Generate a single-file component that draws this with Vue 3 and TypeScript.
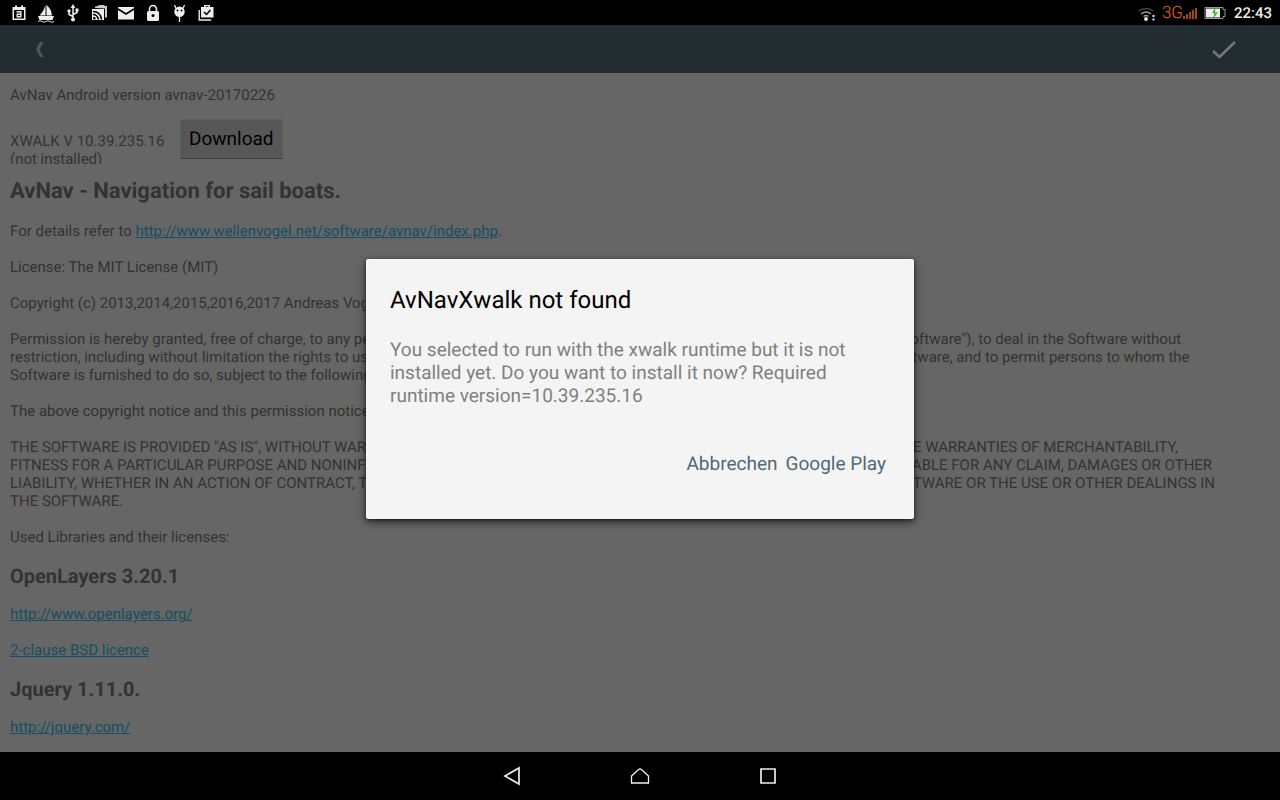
<script setup lang="ts">
interface Library {
  name: string
  links: { label: string; href: string }[]
}

const libraries: Library[] = [
  {
    name: 'OpenLayers 3.20.1',
    links: [
      { label: 'http://www.openlayers.org/', href: 'http://www.openlayers.org/' },
      { label: '2-clause BSD licence', href: '#bsd' },
    ],
  },
  {
    name: 'Jquery 1.11.0.',
    links: [{ label: 'http://jquery.com/', href: 'http://jquery.com/' }],
  },
]
</script>

<template>
  <div class="screen">
    <header class="status">
      <div class="notifications">
        <svg viewBox="0 0 20 20">
          <path d="M4 4h2V2.500h2V4h4V2.500h2V4h2.500v13H3.500V4z" fill="#eee" />
          <path d="M5 7h10v8.500H5z" fill="#000" />
          <path d="M7.500 8.800h4.300v5.500M12 11.300H8.200v2.500H12" fill="none" stroke="#eee" stroke-width="1.400" />
        </svg>
        <svg viewBox="0 0 20 20">
          <path d="M9.500 1.500v11H3.500Q8 8 9.500 1.500zM10.500 2Q15.500 6 16 12.500h-5.500zM2 13h16l-1.500 4h-13z" fill="#eee" />
          <path d="M2 18.500q2-1.500 4 0t4 0 4 0 4 0" fill="none" stroke="#ddd" />
        </svg>
        <svg viewBox="0 0 20 20">
          <path d="M10 4v12M10 13.500L6 11.500V8M10 11.500l4-2V7" fill="none" stroke="#eee" stroke-width="1.500" />
          <path d="M10 1l2.300 4H7.700zM12.500 5.500h3v3h-3z" fill="#eee" />
          <circle cx="6" cy="8" r="1.700" fill="#eee" />
          <circle cx="10" cy="16.500" r="2" fill="#eee" />
        </svg>
        <svg viewBox="0 0 20 20">
          <path d="M5 5V3.500L8 3l1-1h5l1 1h2v11l-2 1V5.500z" fill="#ccc" />
          <path d="M2 6h12v11H2z" fill="#eee" />
          <path d="M3 8.500q7.500 0 8.500 8M3 11.500q4.500 0 5.500 5" fill="none" stroke="#000" stroke-width="1.500" />
          <circle cx="4.300" cy="15.200" r="1.300" fill="#000" />
        </svg>
        <svg viewBox="0 0 20 20">
          <path d="M1 4h16v12.500H1z" fill="#eee" />
          <path d="M1 6l8 5 8-5" fill="none" stroke="#000" stroke-width="1.600" />
        </svg>
        <svg viewBox="0 0 20 20">
          <path d="M5.500 9V6a3.500 3.500 0 0 1 7 0v3" fill="none" stroke="#eee" stroke-width="1.600" />
          <rect x="3" y="8" width="12" height="10" rx="1.500" fill="#eee" />
          <circle cx="9" cy="12.500" r="1.500" fill="#000" />
        </svg>
        <svg viewBox="0 0 20 20">
          <circle cx="8.500" cy="8.800" r="5.200" fill="#eee" />
          <path d="M5 5.500L3.500 2M12 5.500L13.500 2M8.500 12v7" fill="none" stroke="#eee" stroke-width="1.300" />
          <circle cx="6.500" cy="7.500" r="0.900" fill="#000" />
          <circle cx="10.500" cy="7.500" r="0.900" fill="#000" />
        </svg>
        <svg viewBox="0 0 20 20">
          <path d="M3 4h3V2h6v2h3.500v10.500H3z" fill="#eee" />
          <path d="M7.500 3.200h3V4h-3z" fill="#000" />
          <path d="M6 9l2.500 2.500L12.500 7" fill="none" stroke="#000" stroke-width="1.500" />
          <path d="M1.200 7v10h12" fill="none" stroke="#eee" stroke-width="1.400" />
        </svg>
      </div>
      <div class="system">
        <svg class="wifi" viewBox="0 0 20 20">
          <path d="M1.500 8q7.500-5 15 0" fill="none" stroke="#444" stroke-width="1.500" />
          <path d="M4 11q5-4 10 0M6.500 13.500q2.500-2 5 0" fill="none" stroke="#999" stroke-width="1.500" />
          <circle cx="9" cy="16" r="1.900" fill="#eee" />
          <path d="M15.500 12h2v2h-2zM15.500 15.500h2v2h-2z" fill="#eee" />
        </svg>
        <span class="network">3G</span>
        <svg class="signal" viewBox="0 0 14 14">
          <path d="M1 10v3M4 8v5M7 6v7M10 4v9M13 2v11" fill="none" stroke="#dd5b16" stroke-width="1.500" />
        </svg>
        <svg class="battery" viewBox="0 0 22 14">
          <path d="M1 1.500h18v2h2v7h-2v2H1z" fill="none" stroke="#999" />
          <path d="M2 2.500h14v9H2z" fill="#eee" />
          <path d="M11.500 1.500L8 7h2.500L9 12.500 14 6.500h-3z" fill="#35b51b" />
        </svg>
        <time class="clock">22:43</time>
      </div>
    </header>

    <div class="stage">
      <nav class="toolbar">
        <button class="tool" aria-label="Back">
          <svg viewBox="0 0 24 24" class="back">
            <path d="M12 5h3.500l-4 7.500 4 7.500H12l-4-7.500z" fill="#50585b" />
          </svg>
        </button>
        <button class="tool" aria-label="Confirm">
          <svg viewBox="0 0 24 24" class="check">
            <path d="M1 14l6.500 6L23 5" fill="none" stroke="#747779" stroke-width="2.600" />
          </svg>
        </button>
      </nav>

      <main class="content">
        <p class="version">AvNav Android version avnav-20170226</p>
        <div class="runtime">
          <p class="runtime-name">XWALK V 10.39.235.16 (not installed)</p>
          <button class="download">Download</button>
        </div>
        <h1>AvNav - Navigation for sail boats.</h1>
        <p>For details refer to <a href="http://www.wellenvogel.net/software/avnav/index.php">http://www.wellenvogel.net/software/avnav/index.php</a>.</p>
        <p>License: The MIT License (MIT)</p>
        <p>Copyright (c) 2013,2014,2015,2016,2017 Andreas Vogel</p>
        <p>Permission is hereby granted, free of charge, to any person obtaining a copy of this software and associated documentation files (the "Software"), to deal in the Software without restriction, including without limitation the rights to use, copy, modify, merge, publish, distribute, sublicense, and/or sell copies of the Software, and to permit persons to whom the Software is furnished to do so, subject to the following conditions:</p>
        <p>The above copyright notice and this permission notice shall be included in all copies or substantial portions of the Software.</p>
        <p>THE SOFTWARE IS PROVIDED "AS IS", WITHOUT WARRANTY OF ANY KIND, EXPRESS OR IMPLIED, INCLUDING BUT NOT LIMITED TO THE WARRANTIES OF MERCHANTABILITY, FITNESS FOR A PARTICULAR PURPOSE AND NONINFRINGEMENT. IN NO EVENT SHALL THE AUTHORS OR COPYRIGHT HOLDERS BE LIABLE FOR ANY CLAIM, DAMAGES OR OTHER LIABILITY, WHETHER IN AN ACTION OF CONTRACT, TORT OR OTHERWISE, ARISING FROM, OUT OF OR IN CONNECTION WITH THE SOFTWARE OR THE USE OR OTHER DEALINGS IN THE SOFTWARE.</p>
        <p>Used Libraries and their licenses:</p>
        <section v-for="library in libraries" :key="library.name">
          <h2>{{ library.name }}</h2>
          <p v-for="link in library.links" :key="link.label">
            <a :href="link.href">{{ link.label }}</a>
          </p>
        </section>
      </main>

      <div class="overlay">
        <div class="dialog" role="dialog" aria-labelledby="dialog-title">
          <h2 id="dialog-title" class="dialog-title">AvNavXwalk not found</h2>
          <p class="dialog-text">You selected to run with the xwalk runtime but it is not installed yet. Do you want to install it now? Required runtime version=10.39.235.16</p>
          <div class="actions">
            <button>Abbrechen</button>
            <button>Google Play</button>
          </div>
        </div>
      </div>
    </div>

    <footer class="navbar">
      <button aria-label="Back">
        <svg viewBox="0 0 20 20"><path d="M17 2v16L3 10z" /></svg>
      </button>
      <button aria-label="Home">
        <svg viewBox="0 0 20 20"><path d="M1.500 17V10L8.500 3.500q1.500-1 3 0L18.500 10v7z" class="thin" /></svg>
      </button>
      <button aria-label="Recent apps">
        <svg viewBox="0 0 20 20"><path d="M3 3h14v14H3z" /></svg>
      </button>
    </footer>
  </div>
</template>

<style>
body {
  margin: 0;
  background: #000;
}
</style>

<style scoped>
.screen {
  display: flex;
  flex-direction: column;
  height: 100vh;
  overflow: hidden;
  font-family: Roboto, "Liberation Sans", sans-serif;
  font-size: 15px;
  line-height: 18px;
  text-rendering: geometricPrecision;
  color: #333;
}

button {
  border: 0;
  padding: 0;
  background: none;
  font: inherit;
  text-rendering: inherit;
  color: inherit;
}

svg {
  display: block;
}

.status {
  flex: none;
  display: flex;
  align-items: center;
  justify-content: space-between;
  height: 25px;
  padding: 0 8px 0 9px;
  background: #000;
}

.notifications {
  display: flex;
  gap: 7px;
}

.notifications svg {
  width: 20px;
  height: 20px;
}

.system {
  display: flex;
  align-items: center;
}

.wifi {
  width: 20px;
  height: 20px;
  margin-right: 5px;
}

.network {
  font-size: 17px;
  font-weight: 300;
  color: #ee6216;
}

.signal {
  width: 14px;
  height: 14px;
}

.battery {
  width: 22px;
  height: 14px;
  margin: 0 8px 0 7px;
}

.clock {
  font-size: 15px;
  font-weight: 500;
  color: #eee;
}

.stage {
  flex: 1;
  min-height: 0;
  position: relative;
  display: flex;
  flex-direction: column;
}

.toolbar {
  flex: none;
  display: flex;
  align-items: center;
  justify-content: space-between;
  height: 48px;
  padding: 0 44px 0 28px;
  background: #232c31;
}

.tool svg {
  width: 24px;
  height: 24px;
}

.content {
  flex: 1;
  min-height: 0;
  overflow: hidden;
  padding: 13px 50px 0 10px;
  background: #666;
}

.content p {
  margin: 0 0 18px;
}

.content .version {
  margin-bottom: 15px;
}

.content a {
  color: #144f63;
}

.runtime {
  display: flex;
  gap: 10px;
  height: 45px;
  overflow: hidden;
}

.content .runtime-name {
  width: 160px;
  margin: 13px 0 0;
}

.download {
  height: 40px;
  padding: 0 8px;
  background: #575757;
  border: 1px solid #5c5c5c;
  border-bottom-color: #3e3e3e;
  color: #000;
  font-size: 19px;
}

h1 {
  margin: 14px 0 16px;
  font-size: 22px;
  line-height: 28px;
  font-weight: 700;
}

h2 {
  margin: 0 0 17px;
  font-size: 20px;
  line-height: 24px;
  font-weight: 700;
}

.overlay {
  position: absolute;
  inset: 0;
  display: flex;
  align-items: center;
  justify-content: center;
}

.dialog {
  box-sizing: border-box;
  width: 548px;
  max-width: 100%;
  padding: 27px 24px 43px;
  background: #f4f4f4;
  border-radius: 2px;
  box-shadow: 0 3px 10px rgba(0, 0, 0, 0.6), 0 1px 3px rgba(0, 0, 0, 0.5);
}

.dialog-title {
  margin: 0 0 24px;
  font-size: 24px;
  line-height: 28px;
  font-weight: 400;
  color: #000;
}

.dialog-text {
  margin: 0 0 45px;
  font-size: 19px;
  line-height: 23px;
  color: #808080;
}

.actions {
  display: flex;
  justify-content: flex-end;
  gap: 8px;
  padding-right: 4px;
  font-size: 19px;
  line-height: 24px;
  color: #4d6a79;
}

.navbar {
  flex: none;
  display: flex;
  align-items: center;
  justify-content: center;
  gap: 108px;
  height: 48px;
  background: #000;
}

.navbar svg {
  width: 20px;
  height: 20px;
  fill: none;
  stroke: #eee;
  stroke-width: 1.700;
}

.navbar .thin {
  stroke-width: 1.300;
}
</style>
